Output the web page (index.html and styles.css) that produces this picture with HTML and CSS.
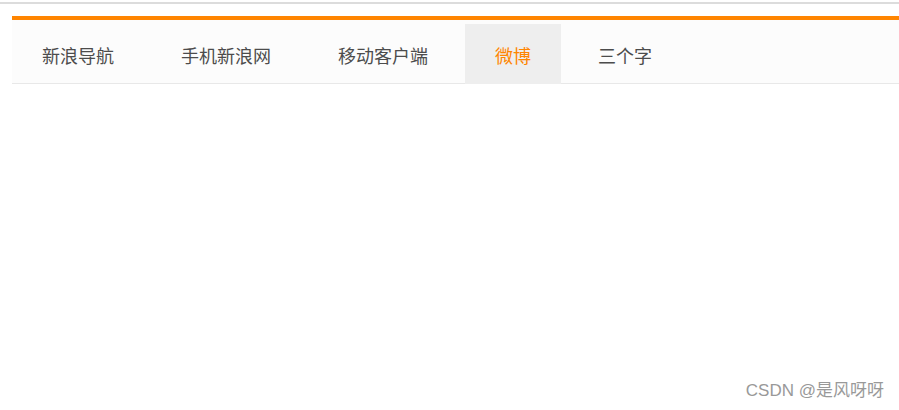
FILE: index.html
```html
<!DOCTYPE html>
<html lang="zh-CN">
  <head>
    <meta charset="UTF-8" />
    <title>新浪导航</title>
    <link rel="stylesheet" href="styles.css">
  </head>
  <body>
    <div class="top-line"></div>

    <!-- 导航栏 -->
    <div class="nav">
      <a href="#" class="nav-item">新浪导航</a>
      <a href="#" class="nav-item">手机新浪网</a>
      <a href="#" class="nav-item">移动客户端</a>
      <a href="#" class="nav-item active">微博</a>
      <a href="#" class="nav-item">三个字</a>
    </div>

    <div class="watermark">CSDN @是风呀呀</div>
  </body>
</html>
```

FILE: styles.css
```css
body { margin: 0; font-family: "Microsoft YaHei", "Noto Sans CJK SC", sans-serif; background-color: #fff; }
.top-line { height: 2px; margin-top: 2px; background-color: #dcdcdc; }

/* 导航栏 */
.nav { display: flex; gap: 7px; height: 63px; margin: 12px 0 0 12px; border-top: 4px solid #ff8500; border-bottom: 1px solid #e8e8e8; background-color: #fcfcfc; }
.nav-item { display: block; height: 62px; margin-top: 4px; padding: 0 30px; line-height: 62px; font-size: 18px; color: #4c4c4c; text-decoration: none; }
.nav-item.active { background-color: #eee; color: #ff8500; }

/* 水印 */
.watermark { position: absolute; right: 15px; bottom: 9px; font-family: "Liberation Sans", "Noto Sans CJK SC", sans-serif; font-size: 17px; color: #999; }
```
